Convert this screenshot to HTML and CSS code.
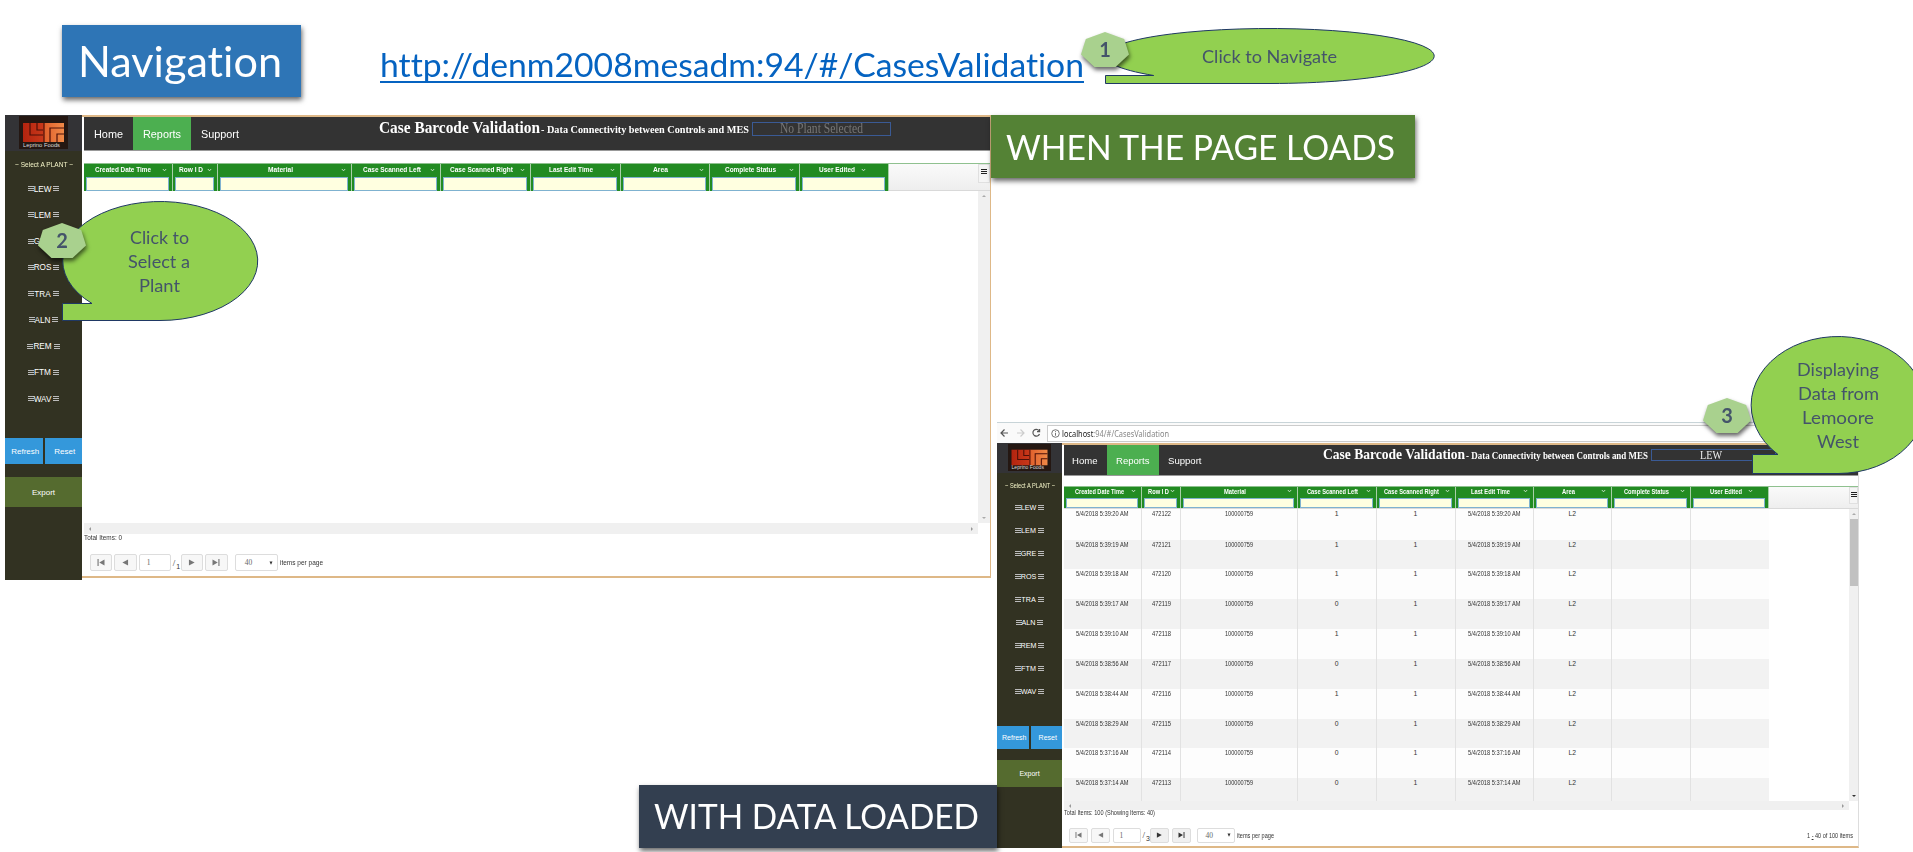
FILE: index.html
```
<!DOCTYPE html>
<html lang="en">
<head>
<meta charset="utf-8">
<title>Navigation</title>
<link rel="stylesheet" href="styles.css">
</head>
<body>
<main class="slide">
  <h1 class="label label-nav"><span data-w="204">Navigation</span></h1>
  <a class="link" href="#"><span data-w="704">http://denm2008mesadm:94/#/CasesValidation</span></a>

  <section class="app app-empty" id="empty"></section>
  <section class="browser">
    <div class="toolbar">
      <svg class="nav-icons" viewBox="0 0 48 18" width="48" height="18" fill="none" stroke-width="1.2">
        <path d="M9 9H2M5.500 5.500L2 9l3.500 3.500" stroke="#555"/>
        <path d="M18 9h7M21.500 5.500L25 9l-3.500 3.500" stroke="#ccc"/>
        <path d="M40 6.600A3.400 3.400 0 1 0 40.500 10M40.600 5v2.600H38" stroke="#555"/>
      </svg>
      <div class="address">
        <svg viewBox="0 0 10 10" width="9" height="9" fill="none" stroke="#666"><circle cx="5" cy="5" r="4.200"/><path d="M5 4.300V7.500M5 2.400v1"/></svg>
        <span data-w="107"><b>localhost</b>:94/#/CasesValidation</span>
      </div>
    </div>
    <section class="app app-loaded" id="loaded"></section>
  </section>

  <h2 class="label label-load"><span data-w="389">WHEN THE PAGE LOADS</span></h2>
  <h2 class="label label-data"><span data-w="325">WITH DATA LOADED</span></h2>

  <svg class="callouts" viewBox="0 0 1913 852" width="1913" height="852">
    <path d="M1105.500 75.500H1153.700A164.500 27.500 0 1 1 1270 83.500H1105.500Z"/>
    <path d="M62.500 303.500H92A97.500 59.500 0 1 1 160 320.500H62.500Z"/>
    <path d="M1752.500 454.500H1778A87 68.500 0 1 1 1838 473.500H1752.500Z"/>
  </svg>
  <p class="note note-1"><span data-w="135">Click to Navigate</span></p>
  <p class="note note-2"><span data-w="59">Click to</span><span data-w="62">Select a</span><span data-w="41">Plant</span></p>
  <p class="note note-3"><span data-w="82">Displaying</span><span data-w="81">Data from</span><span data-w="72">Lemoore</span><span data-w="42">West</span></p>
  <div class="badge badge-1"><i>1</i></div>
  <div class="badge badge-2"><i>2</i></div>
  <div class="badge badge-3"><i>3</i></div>
</main>
<script src="app.js"></script>
</body>
</html>
```
FILE: app.js
```
const plants = ['LEW', 'LEM', 'GRE', 'ROS', 'TRA', 'ALN', 'REM', 'FTM', 'WAV'];
const columns = ['Created Date Time', 'Row I D', 'Material', 'Case Scanned Left', 'Case Scanned Right',
  'Last Edit Time', 'Area', 'Complete Status', 'User Edited'];
const records = [
  ['5:39:20', 472122, 1], ['5:39:19', 472121, 1], ['5:39:18', 472120, 1], ['5:39:17', 472119, 0],
  ['5:39:10', 472118, 1], ['5:38:56', 472117, 0], ['5:38:44', 472116, 1], ['5:38:29', 472115, 0],
  ['5:37:16', 472114, 0], ['5:37:14', 472113, 0]
];

const logo = `<svg class="logo" viewBox="0 0 49 33" preserveAspectRatio="none">
  <defs><linearGradient id="glow"><stop offset="0" stop-color="#b3240f"/><stop offset=".5" stop-color="#c8381a"/><stop offset=".52" stop-color="#e0602c"/><stop offset="1" stop-color="#f08a48"/></linearGradient></defs>
  <rect width="49" height="33" fill="#241712"/>
  <rect x="4" y="7" width="41" height="19" fill="url(#glow)"/>
  <path d="M11 7v12h13M18 7v7h6M25 7v19M45 12H31v14M45 18h-7v8" fill="none" stroke="#4d1008" stroke-width="1.200"/>
  <text x="4" y="31" textLength="37" lengthAdjust="spacingAndGlyphs" font-family="Liberation Sans" font-size="6" fill="#ddd">Leprino Foods</text>
</svg>`;
const caret = '<svg class="caret" viewBox="0 0 6 4"><path d="M1 .8L3 3L5 .8" fill="none" stroke="#fff"/></svg>';
const bars = '<svg class="bars" viewBox="0 0 6 6"><path d="M0 .5h6M0 2.500h6M0 4.500h6" stroke="currentColor" shape-rendering="crispEdges"/></svg>';
const arrow = (d, c = '') => `<svg class="arrow ${c}" viewBox="0 0 8 8"><path d="${d}" fill="currentColor"/></svg>`;
const icons = {
  first: 'M0 0h1.300v8H0zM8 .5v7L2 4z', prev: 'M7.500 .5v7L1 4z',
  next: 'M.5 .5v7L7 4z', last: 'M6.700 0H8v8H6.700zM0 .5v7L6 4z'
};
const fit = (text, w) => w ? `<span data-w="${w}">${text}</span>` : `<span>${text}</span>`;

function app(o) {
  const rows = o.rows.map(([time, id, left]) => {
    const date = fit(`5/4/2018 ${time} AM`, 52.5);
    return `<div class="row">${[date, fit(id, 19), fit('100000759', 28), left, 1, date, 'L2', '', '']
      .map(v => `<div>${v}</div>`).join('')}</div>`;
  }).join('');
  return `
  <aside class="side">
    <div class="brand">${logo}</div>
    <div class="pick">${fit('~ Select A PLANT ~', o.pick)}</div>
    <ul class="plants">${plants.map(p => `<li>${bars}<span>${p}</span>${bars}</li>`).join('')}</ul>
    <div class="pair"><button>Refresh</button><button>Reset</button></div>
    <button class="export">Export</button>
  </aside>
  <div class="main">
    <header class="top">
      <nav><a>${fit('Home', o.nav[0])}</a><a class="on">${fit('Reports', o.nav[1])}</a><a>${fit('Support', o.nav[2])}</a></nav>
      <div class="title"><strong>${fit('Case Barcode Validation', o.title)}</strong><b>${fit('- Data Connectivity between Controls and MES', o.sub)}</b><span class="plant">${fit(o.plant, o.plantW)}</span></div>
    </header>
    <div class="grid">
      <div class="head">
        <div class="cols">${columns.map((c, i) => `<div class="col"><div class="name"><span class="cap">${fit(c, o.caps[i])}</span>${caret}</div><div class="filter"></div></div>`).join('')}</div>
        <div class="menu">${bars}</div>
      </div>
      <div class="body">
        <div class="rows">${rows}</div>
        <div class="vbar">${arrow('M0 6h8L4 2z')}<i class="thumb"></i>${arrow('M0 2h8L4 6z', 'dn')}</div>
      </div>
      <div class="hbar">${arrow('M6 0v8L2 4z')}${arrow('M2 0v8L6 4z')}</div>
      <div class="total">${fit(o.total, o.totalW)}</div>
      <div class="pager">
        <i class="btn">${arrow(icons.first)}</i><i class="btn">${arrow(icons.prev)}</i>
        <i class="page">1</i><i class="of">/<sub>${o.pages}</sub></i>
        <i class="btn go">${arrow(icons.next)}</i><i class="btn go">${arrow(icons.last)}</i>
        <i class="size"><span>40</span>${arrow('M1 1h6L4 7.500z')}</i>
        <span class="per">${fit('items per page', o.per)}</span>
        <span class="range">${o.range ? fit(o.range, 46) : ''}</span>
      </div>
    </div>
  </div>`;
}

document.getElementById('empty').innerHTML = app({
  rows: [], pick: 58, nav: [29, 38, 38], title: 161, sub: 208, plant: 'No Plant Selected', plantW: 83,
  caps: [56, 24, 25, 58, 63, 44, 15, 51, 36], total: 'Total Items: 0', totalW: 38, pages: 1, per: 43
});
document.getElementById('loaded').innerHTML = app({
  rows: records, pick: 50, nav: [25.5, 33.5, 33.5], title: 142, sub: 182, plant: 'LEW', plantW: 22,
  caps: [49, 21, 22, 51, 55, 39, 13, 45, 32], total: 'Total Items: 100 (Showing Items: 40)', totalW: 91,
  pages: 3, per: 37, range: '1 <u>-</u> 40 of 100 items'
});

// Condense or widen each caption to the width it is given.
document.querySelectorAll('[data-w]').forEach(el => {
  const target = Number(el.dataset.w);
  const width = el.getBoundingClientRect().width;
  el.style.transform = `scaleX(${target / width})`;
  el.style.marginRight = `${target - width}px`;
});
```
FILE: styles.css
```
* { box-sizing: border-box; }
body { margin: 0; background: #fff; font-family: "Liberation Sans", Arial, sans-serif; font-variant-ligatures: none; }
.slide { position: relative; width: 1913px; height: 852px; overflow: hidden; background: #fff; }
[data-w] { display: inline-block; white-space: nowrap; transform-origin: 0 50%; flex: none; }

.label { position: absolute; margin: 0; display: flex; align-items: center; color: #fff;
  font-family: Lato, sans-serif; font-weight: 400; box-shadow: 1px 3px 5px rgba(0,0,0,.6); }
.label-nav { left: 62px; top: 25px; width: 239px; height: 72px; padding: 0 0 1px 16px; background: #2e75b6; font-size: 42px; }
.label-load { left: 991px; top: 115px; width: 424px; height: 63px; padding: 0 0 1px 15px; background: #548235; font-size: 35px; }
.label-data { left: 639px; top: 785px; width: 358px; height: 63px; padding: 0 0 3px 15px; background: #333f50; font-size: 35px; }
.link { position: absolute; left: 380px; top: 44px; height: 39px; color: #0563c1; font-family: Lato, sans-serif; font-size: 33px; line-height: 41px;
  text-decoration: none; border-bottom: 2px solid #0563c1; }

.app { display: grid; font-size: var(--fs); color: #333; }
.app-empty { position: absolute; left: 5px; top: 115px; width: 986px; height: 465px; grid-template-columns: 77px 909px;
  --fs: 8px; --brand: 36px; --logo-w: 49px; --logo-h: 33px; --pick: 25px; --pitch: 26.25px; --plants: 262px; --pair: 26px; --gap: 13px; --export: 30px;
  --top: 34px; --nav: 11px; --title: 16px; --sub: 11px; --plant: 14px;
  --cols: 89px 45.500px 133.500px 89.500px 89.500px 90px 89px 90px 89px;
  --grid-pad: 12px; --head: 28px; --body: 332px; --hbar: 11px; --total: 20px; --bar: 12px; --menu-h: 19px; --name: 13px; --total-line: 8px; }
.app-loaded { height: 405px; grid-template-columns: 65px 797px;
  --fs: 7px; --brand: 30px; --logo-w: 43px; --logo-h: 27px; --pick: 23px; --pitch: 23px; --plants: 230px; --pair: 23px; --gap: 11px; --export: 27px;
  --top: 31px; --nav: 9.500px; --title: 14.500px; --sub: 9.800px; --plant: 12px;
  --cols: 78.500px 39px 117px 78.500px 79px 78px 78.500px 78.500px 78.500px;
  --grid-pad: 9.500px; --head: 23px; --body: 292.500px; --hbar: 9px; --total: 17.500px; --bar: 9px; --menu-h: 17px; --name: 11px; --total-line: 6px; }

.side { background: #323222; color: #fff; height: 100%; }
.brand { height: var(--brand); background: #333336; display: flex; justify-content: center; padding-top: 1px; }
.logo { width: var(--logo-w); height: var(--logo-h); }
.pick { height: var(--pick); display: flex; align-items: center; justify-content: center; color: #f5f5c8; padding-top: 2px; }
.plants { list-style: none; margin: 0; padding: 0; height: var(--plants); font-size: calc(var(--fs) + .2px); }
.plants li { height: var(--pitch); display: flex; align-items: center; justify-content: center; }
.plants li .bars:last-child { margin-left: 2px; }
.bars { width: 6px; height: 6px; flex: none; }
.plants .bars { color: #bbb; }
.side button { border: 0; padding: 0; color: #fff; font: inherit; }
.pair { display: flex; height: var(--pair); gap: 2px; margin-bottom: var(--gap); }
.side .pair button { flex: 1; background: #3498db; padding-left: 3px; }
.side .export { display: block; width: 100%; height: var(--export); background: #556b2f; }

.main { border-top: 2px solid #deb887; border-bottom: 2px solid #deb887; height: calc(100% - var(--trim, 0px)); overflow: hidden; padding-left: 1.700px; }
.app-empty .main { --trim: 2.500px; border-right: 1px solid #deb887; }
.app-loaded .main { border-right: 1px solid #ddd; padding-left: 1.500px; }
.top { height: var(--top); background: #333; border-bottom: 1px solid #999; display: flex; color: #fff; }
.top nav { display: flex; font-size: var(--nav); }
.top nav a { display: flex; align-items: center; }
.app-empty nav a { padding: 0 10px 0 10px; }
.app-loaded nav a { padding: 0 9px 0 8.500px; }
.app-loaded nav a + a { padding-left: 9.500px; }
.top nav .on { background: #4caf50; }
.title { display: flex; align-items: baseline; font-family: "Liberation Serif", serif; font-size: var(--title); }
.title b { font-size: var(--sub); margin-left: 1px; }
.app-empty .title { margin-left: 130px; padding-top: 2px; }
.app-loaded .title { margin-left: 112px; padding-top: 1px; }
.title .plant { border: 1px solid #3a5a94; font-size: var(--plant); text-align: center; margin-left: 3px; }
.app-empty .plant { width: 139px; height: 14px; line-height: 12px; color: #777; }
.app-loaded .plant { width: 125px; height: 12px; line-height: 10px; color: #eee; padding-right: 4px; }

.grid { padding-top: var(--grid-pad); }
.head { height: var(--head); display: flex; justify-content: space-between; border-top: 1px solid #8fc18f; border-bottom: 1px solid #d9d9d9;
  background: linear-gradient(#fafafa, #eee); }
.cols, .row { display: grid; grid-template-columns: var(--cols); }
.col { background: #228b22; border-right: 1px solid #a9cfa9; color: #fff; font-weight: 700; padding: 0 3px 0 2px; font-size: calc(var(--fs) - .5px); }
.name { display: flex; align-items: center; height: var(--name); padding-bottom: 2px; }
.cap { flex: 1; text-align: center; }
.col:first-child .cap { text-align: left; padding-left: 9px; }
.col:nth-child(2) .cap { text-align: left; padding-left: 4px; }
.col:last-child .cap { flex: none; padding: 0 6px 0 17px; }
.caret { width: 5px; height: 4px; margin-right: 2px; opacity: .85; }
.filter { height: calc(var(--head) - var(--name) - 1.500px); background: #ffffe0; border: 1px solid #7fb2d0; }
.menu { width: var(--bar); height: var(--menu-h); border: 1px solid #e0e0e0; background: #f5f5f5; display: flex; justify-content: center; padding-top: 4px; color: #222; }
.body { height: var(--body); display: flex; justify-content: space-between; overflow: hidden; }
.row { height: 29.850px; background: #fdfdfd; font-size: 6.800px; line-height: 8px; text-align: center; }
.row:first-child { height: 31px; }
.row:nth-child(even) { background: #f2f2f2; }
.row > div { border-right: 1px solid #e2e2e2; padding-top: 1px; }
.row > div:last-child { border: 0; }
.vbar { width: var(--bar); background: #f0f0f0; display: flex; flex-direction: column; align-items: center; color: #aaa; padding: 3px 0; }
.rows + .vbar { margin-left: auto; }
.arrow { width: 4px; height: 4px; flex: none; }
.vbar .dn { margin-top: auto; }
.thumb { display: none; }
.app-loaded .thumb { display: block; width: 8px; height: 67px; background: #c1c1c1; margin-top: 3px; }
.app-loaded .dn { color: #333; }
.hbar { height: var(--hbar); margin-right: var(--bar); background: #f0f0f0; display: flex; justify-content: space-between; align-items: center; padding: 0 4px; color: #999; }
.total { height: var(--total); font-size: calc(var(--fs) - .3px); line-height: var(--total-line); }
.pager { display: flex; align-items: center; font-size: calc(var(--fs) - .3px); }
.pager i { font-style: normal; display: flex; align-items: center; }
.btn, .page, .size { border: 1px solid #ddd; border-radius: 2px; }
.pager .btn { justify-content: center; background: #f7f7f7; color: #777; }
.page, .size { font-family: "Liberation Serif", serif; font-size: 7.500px; color: #666; }
.pager .size { justify-content: space-between; }
.size .arrow { color: #333; }
.of { font-family: "Liberation Serif", serif; font-size: 9px; }
.of sub { font: 7px "Liberation Sans", sans-serif; align-self: flex-end; padding-left: 1px; }
.app-empty .pager { height: 17px; padding-left: 6px; }
.app-empty .btn { width: 22.500px; height: 17px; margin-right: 2px; }
.app-empty .btn .arrow { width: 8px; height: 7px; }
.app-empty .page { width: 32px; height: 17px; padding-left: 7px; }
.app-empty .of { width: 10px; height: 14px; padding-left: 2px; }
.app-empty .size { width: 43px; height: 17px; margin: 0 2px 0 5px; padding: 0 4px 0 9px; }
.app-loaded .pager { height: 15px; padding-left: 5px; }
.app-loaded .btn { width: 19px; height: 15px; margin-right: 3px; }
.app-loaded .btn .arrow { width: 7px; height: 6px; }
.app-loaded .pager .go { color: #333; background: #f0f0f0; }
.app-loaded .page { width: 28px; height: 15px; padding-left: 6px; }
.app-loaded .of { width: 9px; height: 14px; padding-left: 2px; }
.app-loaded .size { width: 38px; height: 15px; margin: 0 2px 0 3px; padding: 0 3px 0 8px; }
.range { margin-left: auto; padding-right: 5px; }

.browser { position: absolute; left: 997px; top: 422px; width: 862px; }
.toolbar { height: 21px; border-top: 1px solid #c8d4d8; display: flex; align-items: center; background: #fafafa; }
.nav-icons { margin: 0 0 0 2px; }
.address { flex: 1; height: 17px; border: 1px solid #ccc; background: #fff; display: flex; align-items: center; gap: 2px; padding-left: 3px; font-family: "Noto Sans", sans-serif; font-size: 8px; line-height: 11px; color: #888; margin-right: 20px; }
.address b { font-weight: 400; color: #222; }

.callouts { position: absolute; left: 0; top: 0; fill: #92d050; stroke: #1f3864; stroke-width: 1; }
.note { position: absolute; margin: 0; display: flex; flex-direction: column; align-items: center; color: #44546a; font-family: Lato, sans-serif; font-size: 17.500px; line-height: 24px; }
.note-1 { left: 1202px; top: 45px; }
.note-2 { left: 129px; top: 226px; width: 60px; }
.note-3 { left: 1797px; top: 358px; width: 82px; }
.badge { position: absolute; width: 48px; height: 35px; filter: drop-shadow(1px 3px 2px rgba(0,0,0,.6)); }
.badge i { display: block; height: 100%; background: #a9d18e; clip-path: polygon(50% 0, 90% 20%, 100% 64%, 72% 100%, 28% 100%, 0 64%, 10% 20%);
  font: 700 20px/35px Lato, sans-serif; color: #44546a; text-align: center; }
.badge-1 { left: 1081px; top: 32px; }
.badge-2 { left: 38px; top: 223px; }
.badge-3 { left: 1703px; top: 398px; }
```
